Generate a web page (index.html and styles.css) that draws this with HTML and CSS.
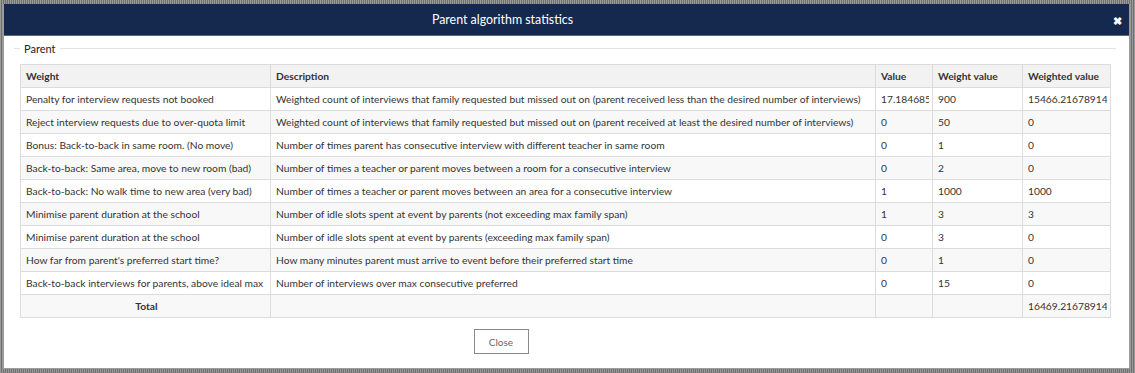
FILE: index.html
```html
<!DOCTYPE html>
<html>
<head>
<meta charset="utf-8">
<link rel="stylesheet" href="styles.css">
</head>
<body>
<div class="modal">
  <div class="modal-header">
    <span class="modal-title">Parent algorithm statistics</span>
    <span class="modal-close">&#10006;</span>
  </div>
  <div class="modal-body">
    <fieldset class="group">
      <legend>Parent</legend>
      <table class="stats">
        <colgroup>
          <col class="c1"><col class="c2"><col class="c3"><col class="c4"><col class="c5">
        </colgroup>
        <thead>
          <tr><th>Weight</th><th>Description</th><th>Value</th><th>Weight value</th><th>Weighted value</th></tr>
        </thead>
        <tbody>
          <tr><td>Penalty for interview requests not booked</td><td>Weighted count of interviews that family requested but missed out on (parent received less than the desired number of interviews)</td><td><span class="clip">17.1846855</span></td><td>900</td><td><span class="clip">15466.21678914</span></td></tr>
          <tr><td>Reject interview requests due to over-quota limit</td><td>Weighted count of interviews that family requested but missed out on (parent received at least the desired number of interviews)</td><td>0</td><td>50</td><td>0</td></tr>
          <tr><td>Bonus: Back-to-back in same room. (No move)</td><td>Number of times parent has consecutive interview with different teacher in same room</td><td>0</td><td>1</td><td>0</td></tr>
          <tr><td>Back-to-back: Same area, move to new room (bad)</td><td>Number of times a teacher or parent moves between a room for a consecutive interview</td><td>0</td><td>2</td><td>0</td></tr>
          <tr><td>Back-to-back: No walk time to new area (very bad)</td><td>Number of times a teacher or parent moves between an area for a consecutive interview</td><td>1</td><td>1000</td><td>1000</td></tr>
          <tr><td>Minimise parent duration at the school</td><td>Number of idle slots spent at event by parents (not exceeding max family span)</td><td>1</td><td>3</td><td>3</td></tr>
          <tr><td>Minimise parent duration at the school</td><td>Number of idle slots spent at event by parents (exceeding max family span)</td><td>0</td><td>3</td><td>0</td></tr>
          <tr><td>How far from parent's preferred start time?</td><td>How many minutes parent must arrive to event before their preferred start time</td><td>0</td><td>1</td><td>0</td></tr>
          <tr><td>Back-to-back interviews for parents, above ideal max</td><td>Number of interviews over max consecutive preferred</td><td>0</td><td>15</td><td>0</td></tr>
          <tr class="total"><td class="total-label">Total</td><td></td><td></td><td></td><td><span class="clip">16469.21678914</span></td></tr>
        </tbody>
      </table>
    </fieldset>
    <div class="footer">
      <button class="btn">Close</button>
    </div>
  </div>
</div>
</body>
</html>
```
FILE: styles.css
```css
html, body {
  margin: 0;
  padding: 0;
}
body {
  width: 1135px;
  height: 373px;
  overflow: hidden;
  background-color: #6f6f6f;
  background-image: repeating-linear-gradient(90deg, #9a9a9a 0 1px, transparent 1px 2px);
  font-family: Lato, "Open Sans", sans-serif;
  padding: 4px 5px 4px 3px;
  box-sizing: border-box;
}
.modal {
  background: #fff;
  height: 365px;
  box-sizing: border-box;
  border: 1px solid #9b9b9b;
  border-top: 0;
  display: flex;
  flex-direction: column;
}
.modal-header {
  background: #14294d;
  height: 32px;
  flex: none;
  display: flex;
  align-items: center;
  justify-content: center;
  padding-right: 128px;
  position: relative;
  border-bottom: 1px solid #5a6577;
  box-sizing: border-box;
}
.modal-title {
  color: #fff;
  font-size: 12.4px;
}
.modal-close {
  position: absolute;
  right: 7px;
  top: 11px;
  color: #fff;
  font-size: 11px;
  font-weight: bold;
  line-height: 11px;
}
.modal-body {
  flex: 1;
  padding: 6px 13px 0 10px;
  display: flex;
  flex-direction: column;
}
.group {
  margin: 0;
  padding: 9px 4px 0 6px;
  border: 0;
  border-top: 1px solid #e2e2e2;
  min-width: 0;
}
.group legend {
  font-size: 11px;
  color: #222;
  padding: 0 4px;
  margin-left: 0;
}
.stats {
  width: 1090px;
  table-layout: fixed;
  border-collapse: collapse;
  font-size: 10.25px;
  color: #333;
}
.c1 { width: 250px; }
.c2 { width: 605px; }
.c3 { width: 57px; }
.c4 { width: 90px; }
.c5 { width: 88px; }
.stats th, .stats td {
  border: 1px solid #dcdcdc;
  height: 23px;
  padding: 0 3px 0 5px;
  text-align: left;
  white-space: nowrap;
  overflow: hidden;
  box-sizing: border-box;
}
.clip {
  display: block;
  overflow: hidden;
  white-space: nowrap;
}
.stats th {
  background: #f2f2f2;
  font-weight: bold;
}
.stats tbody tr:nth-child(even) td {
  background: #f8f8f8;
}
.stats tr.total td {
  background: #f5f5f5;
}
.stats td.total-label {
  text-align: center;
  font-weight: bold;
}
.footer {
  display: flex;
  justify-content: center;
  padding-top: 11px;
  padding-right: 128px;
}
.btn {
  width: 55px;
  height: 25px;
  background: #fff;
  border: 1px solid #8a8a8a;
  font-family: Lato, "Open Sans", sans-serif;
  font-size: 10px;
  color: #666;
  padding: 0;
}
```
